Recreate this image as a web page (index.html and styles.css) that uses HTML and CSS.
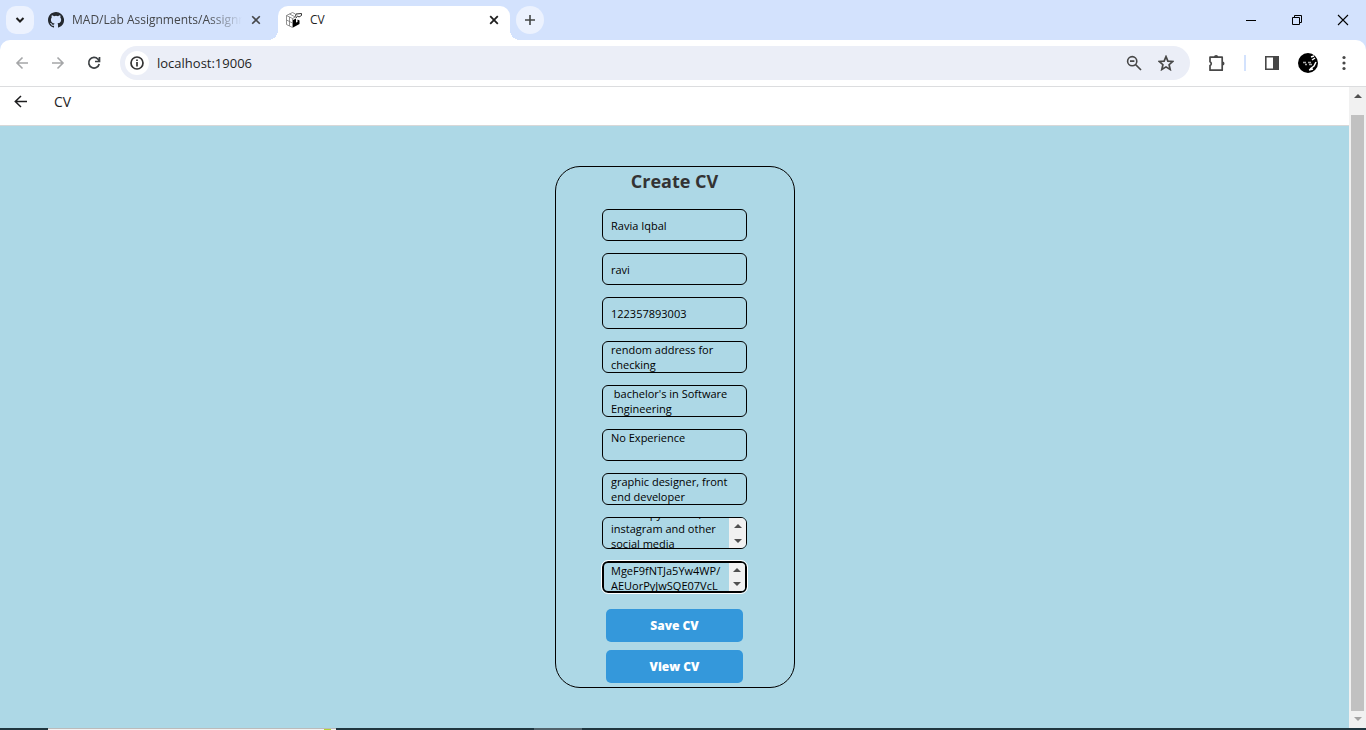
FILE: index.html
```html
<!DOCTYPE html>
<html lang="en">
<head>
<meta charset="utf-8">
<title>CV</title>
<link rel="stylesheet" href="styles.css">
</head>
<body>
<header class="browser">
  <div class="tabs">
    <button class="tab-search" aria-label="Search tabs"><svg width="10" height="8" viewBox="0 0 10 8"><path d="M1.500 2 5 5.500 8.500 2" fill="none" stroke="#1f1f1f" stroke-width="2"/></svg></button>
    <div class="tab tab-idle">
      <svg width="16" height="16" viewBox="0 0 16 16"><path fill="#24292f" d="M8 0C3.580 0 0 3.580 0 8c0 3.540 2.290 6.530 5.470 7.590.4.070.55-.17.55-.38v-1.490c-2.010.37-2.530-.49-2.690-.94-.09-.23-.48-.94-.82-1.130-.28-.15-.68-.52-.01-.53.63-.01 1.080.58 1.230.82.72 1.210 1.870.87 2.330.66.070-.52.28-.87.510-1.070-1.780-.2-3.640-.89-3.640-3.950 0-.87.31-1.590.82-2.150-.08-.2-.36-1.020.08-2.120 0 0 .67-.21 2.200.82a7.600 7.600 0 0 1 4 0c1.530-1.040 2.200-.82 2.200-.82.44 1.100.16 1.920.08 2.120.51.56.82 1.270.82 2.150 0 3.070-1.870 3.750-3.650 3.950.29.25.54.73.54 1.480v2.200c0 .21.15.46.55.38A8 8 0 0 0 8 0"/></svg>
      <span class="tab-title tab-fade">MAD/Lab Assignments/Assignm</span>
      <button class="close" aria-label="Close tab"><svg width="10" height="10" viewBox="0 0 10 10"><path d="m1.200 1.200 7.600 7.600m0-7.600-7.600 7.600" stroke="#45474a" stroke-width="1.600"/></svg></button>
    </div>
    <div class="tab tab-active">
      <svg width="16" height="16" viewBox="0 0 16 16"><path d="m.5 3.500 6-3 3 1.500m-9 1.500v9l6 3v-9l-6-3m3-1.500 6 3M.5 8l6 3m-3-6v9m3-7.500 3-1.500" fill="none" stroke="#777" stroke-width=".8"/><path d="M7 8l3-1.500v4l1.500-.5V7.500l2 1V12L7 15.500z"/><path d="m9.500 4.500.5-2.500 5.500-.5v2L13 5l-1.500-1L10 6" fill="#fff" stroke="#333" stroke-width="1"/></svg>
      <span class="tab-title">CV</span>
      <button class="close" aria-label="Close tab"><svg width="10" height="10" viewBox="0 0 10 10"><path d="m1.200 1.200 7.600 7.600m0-7.600-7.600 7.600" stroke="#1f1f1f" stroke-width="1.800"/></svg></button>
    </div>
    <button class="new-tab" aria-label="New tab"><svg width="12" height="12" viewBox="0 0 12 12"><path d="M6 1v10M1 6h10" stroke="#444746" stroke-width="1.600"/></svg></button>
    <div class="window-controls">
      <button aria-label="Minimize"><svg width="12" height="12" viewBox="0 0 12 12"><path d="M1 6.500h10" stroke="#000"/></svg></button>
      <button aria-label="Restore"><svg width="12" height="12" viewBox="0 0 12 12"><path d="M1.500 3.500h7v7h-7zM3.500 3V1.500h7v7H9" fill="none" stroke="#000"/></svg></button>
      <button aria-label="Close"><svg width="12" height="12" viewBox="0 0 12 12"><path d="m1 1 10 10M11 1 1 11" stroke="#000" stroke-width="1.100"/></svg></button>
    </div>
  </div>
  <div class="toolbar">
    <nav class="nav">
      <button aria-label="Back"><svg width="14" height="14" viewBox="0 0 14 14"><path d="M13 7H2m5.500-5.500L2 7l5.500 5.500" fill="none" stroke="#a5a6a8" stroke-width="1.600"/></svg></button>
      <button aria-label="Forward"><svg width="14" height="14" viewBox="0 0 14 14"><path d="M1 7h11M6.500 1.500 12 7l-5.500 5.500" fill="none" stroke="#a5a6a8" stroke-width="1.600"/></svg></button>
      <button aria-label="Reload"><svg width="14" height="14" viewBox="0 0 14 14"><path d="M12.200 8A5.300 5.300 0 1 1 11 3.200L12.500 5M12.500 1v4.500H8" fill="none" stroke="#3c4043" stroke-width="1.700"/></svg></button>
    </nav>
    <div class="omnibox">
      <button class="info" aria-label="Site information"><svg width="14" height="14" viewBox="0 0 14 14"><circle cx="7" cy="7" r="6" fill="none" stroke="#333" stroke-width="1.700"/><path d="M7 6v4.500M7 3.500V5" stroke="#333" stroke-width="1.700"/></svg></button>
      <input class="address" aria-label="Address" value="localhost:19006">
      <button class="omni-icon" aria-label="Zoom"><svg width="16" height="16" viewBox="0 0 16 16"><circle cx="6.200" cy="6.200" r="4.600" fill="none" stroke="#474747" stroke-width="1.600"/><path d="M9.500 9.500 15 15M4 6.200h4.400" stroke="#474747" stroke-width="1.700"/></svg></button>
      <button class="omni-icon" aria-label="Bookmark"><svg width="16" height="16" viewBox="0 0 16 16"><path d="m8 1.600 1.900 4.500 4.900.4-3.700 3.200 1.100 4.800L8 11.900l-4.200 2.600 1.100-4.800-3.700-3.200 4.900-.4z" fill="none" stroke="#474747" stroke-width="1.700"/></svg></button>
    </div>
    <div class="actions">
      <button aria-label="Extensions"><svg width="18" height="18" viewBox="0 0 18 18"><path d="M2 3.200h12.200v13H2v-4.700a2 2 0 0 0 0-3.700z" fill="none" stroke="#474747" stroke-width="1.700" stroke-linejoin="round"/><path d="M6 3a2.100 2.100 0 0 1 4.200 0zm8.500 4.500a2 2 0 0 1 0 4z" fill="#474747"/></svg></button>
      <span class="divider"></span>
      <button aria-label="Side panel"><svg width="16" height="16" viewBox="0 0 16 16"><path d="M1.800 1.800h12.400v12.400H1.800z" fill="none" stroke="#474747" stroke-width="1.600"/><path d="M9 1.500h5.500v13H9z" fill="#474747"/></svg></button>
      <button aria-label="Profile"><svg width="20" height="20" viewBox="0 0 20 20"><circle cx="10" cy="10" r="10"/><path d="m13 4 3-1m-2 4 3-2m-5 11 4-3 2-4m-7 8 4-1" fill="none" stroke="#fff" stroke-width="1.500"/><path d="M5 9.500h3m2 0h3M7 11.500h2m2 0h3" fill="none" stroke="#aaa" stroke-width="1.400"/></svg></button>
      <button aria-label="Menu"><svg width="4" height="16" viewBox="0 0 4 16"><g fill="#474747"><circle cx="2" cy="2.500" r="1.600"/><circle cx="2" cy="8" r="1.600"/><circle cx="2" cy="13.500" r="1.600"/></g></svg></button>
    </div>
  </div>
</header>
<div class="viewport">
  <div class="page">
    <div class="app-bar">
      <button class="back" aria-label="Go back"><svg width="14" height="14" viewBox="0 0 14 14"><path d="M13 6.500H1.500m5.500-5.500L1.300 6.500 7 12" fill="none" stroke="#1c1c1e" stroke-width="1.500"/></svg></button>
      <h1 class="app-title">CV</h1>
    </div>
    <main class="content">
      <form class="card">
        <h2 class="heading">Create CV</h2>
        <input class="field" aria-label="Name" value="Ravia Iqbal">
        <input class="field" aria-label="Email" value="ravi">
        <input class="field" aria-label="Phone" value="122357893003">
        <textarea class="field" aria-label="Address">rendom address for checking</textarea>
        <textarea class="field" aria-label="Education"> bachelor's in Software Engineering</textarea>
        <textarea class="field" aria-label="Experience">No Experience</textarea>
        <textarea class="field" aria-label="Skills">graphic designer, front end developer</textarea>
        <div class="field scroll-field">
          <textarea class="scroll-text" aria-label="Projects" data-scroll="12">I can copy twitter, instagram and other social media</textarea>
          <span class="mini-bar"><i class="up"></i><i class="down"></i></span>
        </div>
        <div class="field scroll-field focused">
          <textarea class="scroll-text" aria-label="Picture" data-scroll="15">AAAAAAAAAAAAAAA
MgeF9fNTJa5Yw4WP/
AEUorPyJwSQE07VcL
</textarea>
          <span class="mini-bar"><i class="up"></i><i class="down"></i></span>
        </div>
        <div class="buttons">
          <button type="button" class="primary">Save CV</button>
          <button type="button" class="primary">View CV</button>
        </div>
      </form>
    </main>
  </div>
  <div class="scrollbar"><i class="up"></i><span class="thumb"></span><i class="down dim"></i></div>
</div>
<footer class="taskbar"><span class="task-search"><span class="task-art"></span></span><span class="task-item"></span></footer>
<script src="script.js"></script>
</body>
</html>
```
FILE: styles.css
```css
* { box-sizing: border-box; }
body { margin: 0; height: 100vh; display: flex; flex-direction: column; overflow: hidden; background: #fff; color: #1f1f1f; font-family: "Segoe UI", "Open Sans", "Noto Sans", sans-serif; }
button { border: 0; padding: 0; background: none; display: flex; align-items: center; justify-content: center; font: inherit; flex: none; }
svg { display: block; flex: none; }
input, textarea { font: inherit; color: inherit; outline: 0; }

.browser { flex: none; background: #d3e2fd; }
.tabs { height: 40px; display: flex; align-items: center; padding-left: 6px; }
.tab-search { width: 28px; height: 28px; border-radius: 10px; background: #ecf2fe; }
.tab { display: flex; align-items: center; gap: 8px; font-size: 12px; }
.tab-idle { width: 244px; padding: 0 16px 0 14px; color: #45474a; }
.tab-title { flex: 1; min-width: 0; white-space: nowrap; overflow: hidden; line-height: 20px; }
.tab-fade { mask-image: linear-gradient(to right, #000 80%, transparent); }
.close { width: 12px; height: 16px; }
.tab-active { position: relative; align-self: flex-end; width: 232px; height: 34px; padding: 0 10px 6px 8px; background: #fff; border-radius: 10px 10px 0 0; }
.tab-active::before, .tab-active::after { content: ""; position: absolute; bottom: 0; width: 10px; height: 10px; }
.tab-active::before { left: -10px; background: radial-gradient(circle at 0 0, transparent 10px, #fff 10px); }
.tab-active::after { right: -10px; background: radial-gradient(circle at 100% 0, transparent 10px, #fff 10px); }
.new-tab { width: 28px; height: 28px; margin-left: 6px; border-radius: 50%; background: #ecf2fe; }
.window-controls { margin-left: auto; display: flex; }
.window-controls button { width: 46px; height: 40px; }

.toolbar { height: 47px; display: flex; align-items: center; background: #fff; border-radius: 10px 10px 0 0; border-bottom: 1px solid #dcdddf; }
.nav { display: flex; gap: 8px; padding: 0 12px 0 8px; }
.nav button { width: 28px; height: 28px; }
.omnibox { flex: 1; height: 34px; display: flex; align-items: center; gap: 8px; padding: 0 12px 0 5px; border-radius: 17px; background: #ebeef7; }
.info { width: 24px; height: 24px; border-radius: 50%; background: #fff; }
.address { flex: 1; min-width: 0; border: 0; padding: 0; background: none; font-size: 13px; }
.omni-icon { width: 24px; height: 24px; }
.actions { display: flex; align-items: center; padding: 0 14px 0 18px; gap: 18px; }
.divider { width: 2px; height: 16px; background: #d3e2fd; }
.actions button:last-child { width: 16px; }

.viewport { flex: 1; min-height: 0; display: flex; }
.page { flex: 1; min-width: 0; display: flex; flex-direction: column; }
.app-bar { flex: none; height: 39px; display: flex; align-items: center; gap: 26px; padding: 0 14px 8px; border-bottom: 1px solid #d8d8d8; }
.app-title { margin: 0; font-size: 14px; font-weight: 500; line-height: 20px; }
.content { flex: 1; min-height: 0; display: flex; justify-content: center; align-items: flex-start; padding-top: 40px; background: #add8e6; }
.card { width: 240px; display: flex; flex-direction: column; align-items: center; gap: 12px; padding-bottom: 4px; border: 1px solid #000; border-radius: 25px; }
.heading { margin: 0; padding-bottom: 2px; font-size: 18px; line-height: 28px; font-weight: 700; color: #333; }
.field { width: 145px; height: 32px; border: 1px solid #000; border-radius: 6px; padding: 0 8px; background: transparent; color: #000; font-size: 11px; line-height: 15px; resize: none; overflow: hidden; display: block; }
.scroll-field { display: flex; padding: 0 0 0 8px; }
.scroll-text { flex: 1; min-width: 0; border: 0; padding: 0; background: none; line-height: 15px; resize: none; overflow: hidden; white-space: pre-wrap; }
.focused { outline: 1px solid #fff; border-width: 2px; padding-left: 7px; }
.mini-bar { width: 17px; display: flex; flex-direction: column; align-items: center; justify-content: space-around; background: #f1f1f1; }
.focused .mini-bar { width: 16px; }
.up, .down { border: 4px solid transparent; }
.up { border-top: 0; border-bottom-color: #505050; }
.down { border-bottom: 0; border-top-color: #505050; }
.dim { border-top-color: #a3a3a3; }
.buttons { display: flex; flex-direction: column; gap: 8px; padding-top: 4px; }
.primary { width: 137px; height: 33px; border-radius: 5px; background: #3498db; color: #fff; font-size: 12px; font-weight: 800; }

.scrollbar { width: 17px; display: flex; flex-direction: column; align-items: center; padding: 7px 0; gap: 6px; background: #f1f1f1; }
.thumb { flex: 1; width: 13px; margin-top: 11px; background: #c1c1c1; }
.taskbar { flex: none; height: 2px; display: flex; background: #20363f; }
.task-search { width: 288px; margin-left: 48px; background: #f5f3f3; border-top: 1px solid #bbb; padding-left: 276px; }
.task-art { display: block; width: 7px; height: 1px; background: #b5d334; }
.task-item { width: 48px; margin-left: 198px; background: #51636c; }
```
FILE: script.js
```js
document.querySelectorAll("[data-scroll]").forEach((area) => {
  area.scrollTop = Number(area.dataset.scroll);
});
```
